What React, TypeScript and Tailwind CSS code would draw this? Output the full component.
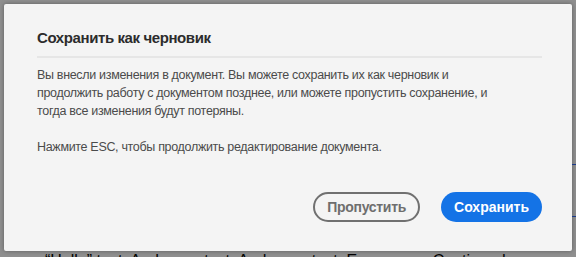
export default function App() {
  return (
    <div
      className="relative w-[576px] h-[257px] overflow-hidden bg-[#8f8f8f]"
      style={{ fontFamily: '"Liberation Sans", Arial, sans-serif' }}
    >
      <div className="absolute left-[4px] top-[4px] w-[568px] h-[247px] bg-[#f4f4f4] rounded-[2px] shadow-[0_0_4px_rgba(0,0,0,0.35)] flex flex-col px-[33px] pt-[24px]">
        <h2 className="text-[15px] tracking-[-0.4px] font-bold text-[#2c2c2c] leading-[20px]">Сохранить как черновик</h2>
        <div className="mt-[8px] h-[2px] bg-[#e6e6e6] w-[505px]" />
        <p className="mt-[8px] text-[12.5px] tracking-[-0.32px] leading-[18px] text-[#4b4b4b] w-[505px]">
          Вы внесли изменения в документ. Вы можете сохранить их как черновик и
          <br />
          продолжить работу с документом позднее, или можете пропустить сохранение, и
          <br />
          тогда все изменения будут потеряны.
        </p>
        <p className="mt-[18px] text-[12.5px] tracking-[-0.32px] leading-[18px] text-[#4b4b4b]">
          Нажмите ESC, чтобы продолжить редактирование документа.
        </p>
        <div className="mt-[36px] flex justify-end gap-[21px] w-[505px]">
          <button className="h-[30px] px-[12px] rounded-full border-2 border-[#707070] text-[#6e6e6e] text-[14px] tracking-[-0.3px] font-bold">
            Пропустить
          </button>
          <button className="h-[30px] px-[13px] rounded-full bg-[#1473e6] text-white text-[14px] font-bold">
            Сохранить
          </button>
        </div>
      </div>
      <div className="absolute left-[45px] top-[249px] text-[16px] text-black whitespace-nowrap">
        “Hello” text. And more text. And more text. Even more. Continued on
      </div>
      <div className="absolute left-[572px] top-[164px] w-[4px] h-[1px] bg-[#1a3a8a]" />
      <div className="absolute left-[572px] top-[216px] w-[4px] h-[1px] bg-[#1a3a8a]" />
    </div>
  );
}
